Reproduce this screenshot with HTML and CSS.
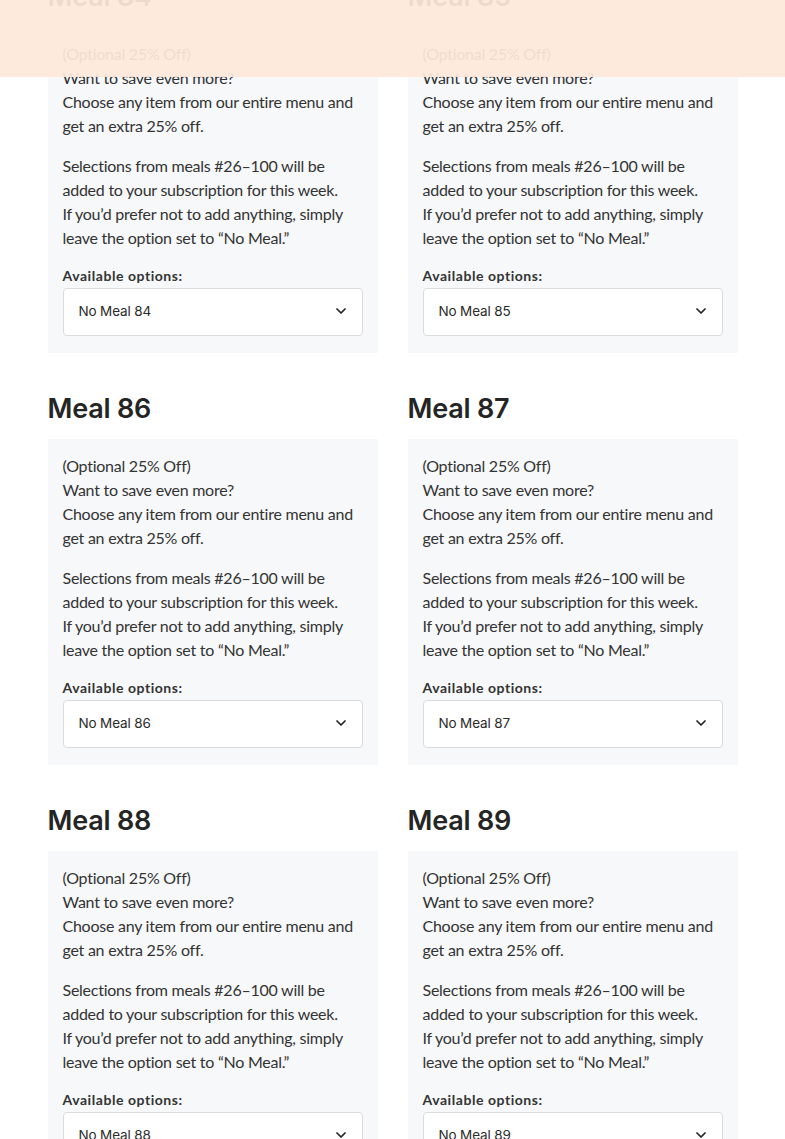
FILE: index.html
```html
<!DOCTYPE html>
<html lang="en">
<head>
<meta charset="utf-8">
<title>Meals</title>
<link rel="stylesheet" href="styles.css">
</head>
<body>
<header class="topbar"></header>
<main class="meals">
  <section class="meal">
    <h2 class="meal-title">Meal 84</h2>
    <div class="card">
      <p>(Optional 25% Off)<br>Want to save even more?<br>Choose any item from our entire menu and get an extra 25% off.</p>
      <p>Selections from meals #26–100 will be added to your subscription for this week.<br>If you’d prefer not to add anything, simply leave the option set to “No Meal.”</p>
      <label class="opt-label">Available options:</label>
      <div class="select-wrap">
        <select class="select"><option>No Meal 84</option></select>
        <svg class="chev" width="12" height="8" viewBox="0 0 12 8"><path d="M2 2 6 6l4-4" fill="none" stroke="#222" stroke-width="1.7" stroke-linecap="round" stroke-linejoin="round"/></svg>
      </div>
    </div>
  </section>
  <section class="meal">
    <h2 class="meal-title">Meal 85</h2>
    <div class="card">
      <p>(Optional 25% Off)<br>Want to save even more?<br>Choose any item from our entire menu and get an extra 25% off.</p>
      <p>Selections from meals #26–100 will be added to your subscription for this week.<br>If you’d prefer not to add anything, simply leave the option set to “No Meal.”</p>
      <label class="opt-label">Available options:</label>
      <div class="select-wrap">
        <select class="select"><option>No Meal 85</option></select>
        <svg class="chev" width="12" height="8" viewBox="0 0 12 8"><path d="M2 2 6 6l4-4" fill="none" stroke="#222" stroke-width="1.7" stroke-linecap="round" stroke-linejoin="round"/></svg>
      </div>
    </div>
  </section>
  <section class="meal">
    <h2 class="meal-title">Meal 86</h2>
    <div class="card">
      <p>(Optional 25% Off)<br>Want to save even more?<br>Choose any item from our entire menu and get an extra 25% off.</p>
      <p>Selections from meals #26–100 will be added to your subscription for this week.<br>If you’d prefer not to add anything, simply leave the option set to “No Meal.”</p>
      <label class="opt-label">Available options:</label>
      <div class="select-wrap">
        <select class="select"><option>No Meal 86</option></select>
        <svg class="chev" width="12" height="8" viewBox="0 0 12 8"><path d="M2 2 6 6l4-4" fill="none" stroke="#222" stroke-width="1.7" stroke-linecap="round" stroke-linejoin="round"/></svg>
      </div>
    </div>
  </section>
  <section class="meal">
    <h2 class="meal-title">Meal 87</h2>
    <div class="card">
      <p>(Optional 25% Off)<br>Want to save even more?<br>Choose any item from our entire menu and get an extra 25% off.</p>
      <p>Selections from meals #26–100 will be added to your subscription for this week.<br>If you’d prefer not to add anything, simply leave the option set to “No Meal.”</p>
      <label class="opt-label">Available options:</label>
      <div class="select-wrap">
        <select class="select"><option>No Meal 87</option></select>
        <svg class="chev" width="12" height="8" viewBox="0 0 12 8"><path d="M2 2 6 6l4-4" fill="none" stroke="#222" stroke-width="1.7" stroke-linecap="round" stroke-linejoin="round"/></svg>
      </div>
    </div>
  </section>
  <section class="meal">
    <h2 class="meal-title">Meal 88</h2>
    <div class="card">
      <p>(Optional 25% Off)<br>Want to save even more?<br>Choose any item from our entire menu and get an extra 25% off.</p>
      <p>Selections from meals #26–100 will be added to your subscription for this week.<br>If you’d prefer not to add anything, simply leave the option set to “No Meal.”</p>
      <label class="opt-label">Available options:</label>
      <div class="select-wrap">
        <select class="select"><option>No Meal 88</option></select>
        <svg class="chev" width="12" height="8" viewBox="0 0 12 8"><path d="M2 2 6 6l4-4" fill="none" stroke="#222" stroke-width="1.7" stroke-linecap="round" stroke-linejoin="round"/></svg>
      </div>
    </div>
  </section>
  <section class="meal">
    <h2 class="meal-title">Meal 89</h2>
    <div class="card">
      <p>(Optional 25% Off)<br>Want to save even more?<br>Choose any item from our entire menu and get an extra 25% off.</p>
      <p>Selections from meals #26–100 will be added to your subscription for this week.<br>If you’d prefer not to add anything, simply leave the option set to “No Meal.”</p>
      <label class="opt-label">Available options:</label>
      <div class="select-wrap">
        <select class="select"><option>No Meal 89</option></select>
        <svg class="chev" width="12" height="8" viewBox="0 0 12 8"><path d="M2 2 6 6l4-4" fill="none" stroke="#222" stroke-width="1.7" stroke-linecap="round" stroke-linejoin="round"/></svg>
      </div>
    </div>
  </section>
</main>
</body>
</html>
```
FILE: styles.css
```css
html, body {
  margin: 0;
  padding: 0;
  background: #ffffff;
}
body {
  font-family: "Lato", "Liberation Sans", sans-serif;
  color: #333333;
  font-size: 16px;
  line-height: 24px;
}
.topbar {
  position: fixed;
  top: 0;
  left: 0;
  right: 0;
  height: 77px;
  background: rgba(253, 232, 218, 0.93);
  z-index: 10;
}
.meals {
  width: 690px;
  margin: -21px auto 0;
  display: grid;
  grid-template-columns: 330px 330px;
  column-gap: 30px;
  row-gap: 38px;
}
.meal-title {
  margin: 0 0 12px;
  font-family: "Inter", "Liberation Sans", sans-serif;
  font-weight: 600;
  font-size: 27px;
  line-height: 36px;
  color: #252525;
  letter-spacing: -0.2px;
}
.card {
  background: #f7f8fa;
  padding: 15px 15px 17px;
}
.card p {
  margin: 0 0 16px;
  letter-spacing: -0.25px;
}
.opt-label {
  display: block;
  font-weight: 700;
  font-size: 14px;
  line-height: 20px;
  letter-spacing: 0.55px;
  color: #333333;
  margin-bottom: 2px;
}
.select-wrap {
  position: relative;
}
.select {
  display: block;
  width: 100%;
  height: 48px;
  appearance: none;
  -webkit-appearance: none;
  background: #ffffff;
  border: 1px solid #dcdcdc;
  border-radius: 4px;
  padding: 0 0 2px 15px;
  font-family: "Inter", "Liberation Sans", sans-serif;
  font-size: 13.5px;
  letter-spacing: -0.15px;
  color: #2b2b2b;
  outline: none;
}
.chev {
  position: absolute;
  right: 16px;
  top: 19px;
  pointer-events: none;
}
```
